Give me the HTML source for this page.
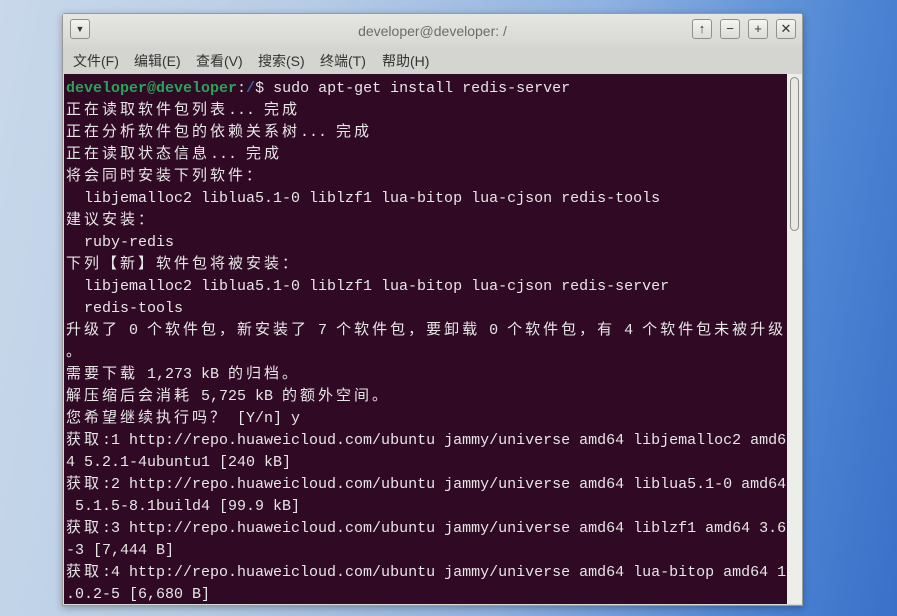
<!DOCTYPE html>
<html><head><meta charset="utf-8"><style>
body{margin:0;width:897px;height:616px;overflow:hidden;position:relative;
background:linear-gradient(100deg,#c9d8ea 0%,#b7cde6 30%,#8fb2e0 60%,#4f86d4 85%,#3a70c8 100%);font-family:"Liberation Sans","Noto Sans CJK SC",sans-serif}
.win{position:absolute;left:62px;top:13px;width:741px;height:593px;background:#d9dad5;border:1px solid #9a9a96;border-radius:3px 3px 0 0;box-shadow:0 2px 8px rgba(0,0,0,.3);box-sizing:border-box}
.title{position:absolute;left:0;right:0;top:0;height:33px;background:linear-gradient(#e6e7e2,#d6d7d2)}
.title .t{position:absolute;left:0;right:0;top:9px;text-align:center;font-size:14px;color:#6c6c6a}
.btn{position:absolute;top:5px;width:20px;height:20px;border:1px solid #8f908c;border-radius:3px;background:linear-gradient(#f4f4f2,#dcdcd8);box-sizing:border-box;font-size:13px;line-height:18px;text-align:center;color:#333}
.menu{position:absolute;left:0;right:0;top:33px;height:27px;background:#d4d5d0;font-size:14px;color:#333}
.menu span{position:absolute;top:4px}
.term{position:absolute;left:1px;top:60px;width:723px;height:530px;background:#300a24;overflow:hidden;font-family:"Liberation Mono","Noto Sans CJK SC",monospace;font-size:15px;color:#e6e6e6}
.sb{position:absolute;left:724px;top:60px;width:15px;height:530px;background:#eceeea}
.thumb{position:absolute;left:3px;top:3px;width:9px;height:154px;border:1px solid #8c8c88;border-radius:5px;background:#e8e8e4;box-sizing:border-box}
.l{position:absolute;left:2px;height:22px;line-height:22px;white-space:pre}
.c{letter-spacing:3px}
.g{color:#26a55a;font-weight:bold}.b{color:#3465a4;font-weight:bold}
</style></head><body>
<div class="win">
<div class="title"><div class="btn" style="left:7px;font-size:9px">▼</div><div class="t">developer@developer: /</div>
<div class="btn" style="left:629px">↑</div><div class="btn" style="left:657px">−</div><div class="btn" style="left:685px">+</div><div class="btn" style="left:713px">✕</div></div>
<div class="menu"><span style="left:10px">文件(F)</span><span style="left:71px">编辑(E)</span><span style="left:133px">查看(V)</span><span style="left:195px">搜索(S)</span><span style="left:257px">终端(T)</span><span style="left:319px">帮助(H)</span></div>
<div class="term">
<div class="l" style="top:4px"><span class="g">developer@developer</span>:<span class="b">/</span>$ sudo apt-get install redis-server</div>
<div class="l" style="top:26px"><span class="c">正在读取软件包列表</span>... <span class="c">完成</span></div>
<div class="l" style="top:48px"><span class="c">正在分析软件包的依赖关系树</span>... <span class="c">完成</span></div>
<div class="l" style="top:70px"><span class="c">正在读取状态信息</span>... <span class="c">完成</span></div>
<div class="l" style="top:92px"><span class="c">将会同时安装下列软件：</span></div>
<div class="l" style="top:114px">  libjemalloc2 liblua5.1-0 liblzf1 lua-bitop lua-cjson redis-tools</div>
<div class="l" style="top:136px"><span class="c">建议安装：</span></div>
<div class="l" style="top:158px">  ruby-redis</div>
<div class="l" style="top:180px"><span class="c">下列【新】软件包将被安装：</span></div>
<div class="l" style="top:202px">  libjemalloc2 liblua5.1-0 liblzf1 lua-bitop lua-cjson redis-server</div>
<div class="l" style="top:224px">  redis-tools</div>
<div class="l" style="top:246px"><span class="c">升级了</span> 0 <span class="c">个软件包，新安装了</span> 7 <span class="c">个软件包，要卸载</span> 0 <span class="c">个软件包，有</span> 4 <span class="c">个软件包未被升级</span></div>
<div class="l" style="top:268px"><span class="c">。</span></div>
<div class="l" style="top:290px"><span class="c">需要下载</span> 1,273 kB <span class="c">的归档。</span></div>
<div class="l" style="top:312px"><span class="c">解压缩后会消耗</span> 5,725 kB <span class="c">的额外空间。</span></div>
<div class="l" style="top:334px"><span class="c">您希望继续执行吗？</span> [Y/n] y</div>
<div class="l" style="top:356px"><span class="c">获取</span>:1 http://repo.huaweicloud.com/ubuntu jammy/universe amd64 libjemalloc2 amd6</div>
<div class="l" style="top:378px">4 5.2.1-4ubuntu1 [240 kB]</div>
<div class="l" style="top:400px"><span class="c">获取</span>:2 http://repo.huaweicloud.com/ubuntu jammy/universe amd64 liblua5.1-0 amd64</div>
<div class="l" style="top:422px"> 5.1.5-8.1build4 [99.9 kB]</div>
<div class="l" style="top:444px"><span class="c">获取</span>:3 http://repo.huaweicloud.com/ubuntu jammy/universe amd64 liblzf1 amd64 3.6</div>
<div class="l" style="top:466px">-3 [7,444 B]</div>
<div class="l" style="top:488px"><span class="c">获取</span>:4 http://repo.huaweicloud.com/ubuntu jammy/universe amd64 lua-bitop amd64 1</div>
<div class="l" style="top:510px">.0.2-5 [6,680 B]</div>
</div>
<div class="sb"><div class="thumb"></div></div>
</div>
</body></html>
